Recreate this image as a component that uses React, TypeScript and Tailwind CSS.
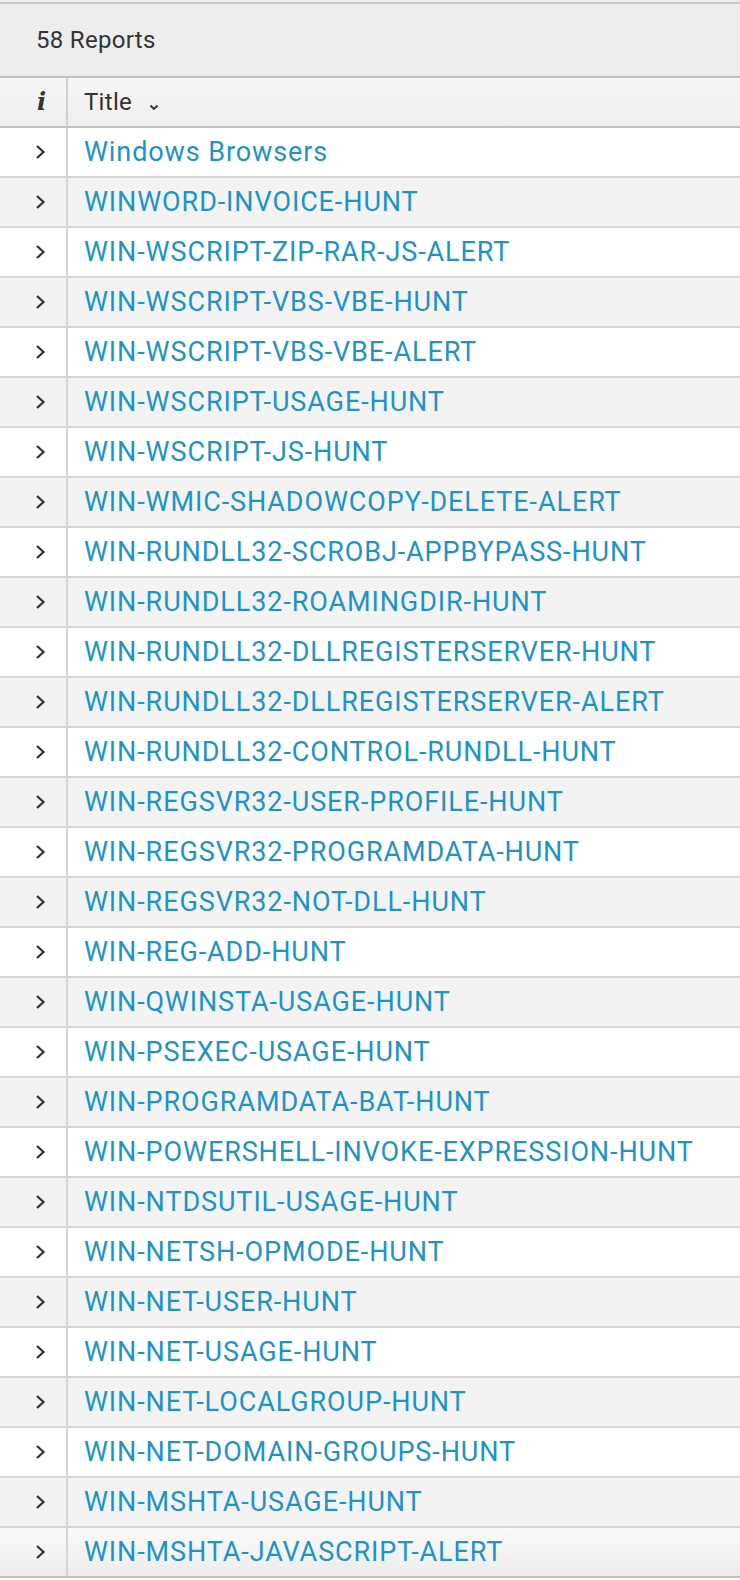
const REPORTS = [
  "Windows Browsers",
  "WINWORD-INVOICE-HUNT",
  "WIN-WSCRIPT-ZIP-RAR-JS-ALERT",
  "WIN-WSCRIPT-VBS-VBE-HUNT",
  "WIN-WSCRIPT-VBS-VBE-ALERT",
  "WIN-WSCRIPT-USAGE-HUNT",
  "WIN-WSCRIPT-JS-HUNT",
  "WIN-WMIC-SHADOWCOPY-DELETE-ALERT",
  "WIN-RUNDLL32-SCROBJ-APPBYPASS-HUNT",
  "WIN-RUNDLL32-ROAMINGDIR-HUNT",
  "WIN-RUNDLL32-DLLREGISTERSERVER-HUNT",
  "WIN-RUNDLL32-DLLREGISTERSERVER-ALERT",
  "WIN-RUNDLL32-CONTROL-RUNDLL-HUNT",
  "WIN-REGSVR32-USER-PROFILE-HUNT",
  "WIN-REGSVR32-PROGRAMDATA-HUNT",
  "WIN-REGSVR32-NOT-DLL-HUNT",
  "WIN-REG-ADD-HUNT",
  "WIN-QWINSTA-USAGE-HUNT",
  "WIN-PSEXEC-USAGE-HUNT",
  "WIN-PROGRAMDATA-BAT-HUNT",
  "WIN-POWERSHELL-INVOKE-EXPRESSION-HUNT",
  "WIN-NTDSUTIL-USAGE-HUNT",
  "WIN-NETSH-OPMODE-HUNT",
  "WIN-NET-USER-HUNT",
  "WIN-NET-USAGE-HUNT",
  "WIN-NET-LOCALGROUP-HUNT",
  "WIN-NET-DOMAIN-GROUPS-HUNT",
  "WIN-MSHTA-USAGE-HUNT",
  "WIN-MSHTA-JAVASCRIPT-ALERT",
];

function Chevron() {
  return (
    <svg width="11" height="16" viewBox="0 0 11 16" className="block">
      <polyline points="2,2 8.5,8 2,14" fill="none" stroke="#333" strokeWidth="2.2" />
    </svg>
  );
}

export default function App() {
  return (
    <div
      className="w-[740px] bg-white"
      style={{ fontFamily: "Roboto, 'Liberation Sans', sans-serif" }}
    >
      <div className="h-[2px] bg-[#ededed]" />
      {/* Count bar */}
      <div className="h-[74px] bg-[#ededed] border-t-2 border-[#c8c8c8] flex items-center pl-[36px] text-[24px] tracking-[0.3px] text-[#333]">
        58 Reports
      </div>

      {/* Column header */}
      <div className="flex h-[52px] border-y-2 border-[#c0c0c0] bg-gradient-to-b from-[#f6f6f6] to-[#eeeeee]">
        <div className="w-[68px] border-r-2 border-[#d0d0d0] flex items-center pl-[37px]">
          <span
            className="italic font-bold text-[24px] text-[#333]"
            style={{ fontFamily: "'DejaVu Serif', 'Liberation Serif', serif" }}
          >
            i
          </span>
        </div>
        <div className="flex items-center pl-[16px] text-[24px] tracking-[0.3px] text-[#333]">
          Title
          <svg width="10" height="7" viewBox="0 0 10 7" className="ml-[17px] mt-[10px]">
            <polyline points="1.5,1.5 5,5 8.5,1.5" fill="none" stroke="#333" strokeWidth="1.8" />
          </svg>
        </div>
      </div>

      {/* Rows */}
      {REPORTS.map((title, i) => {
        const last = i === REPORTS.length - 1;
        const bg = last
          ? "bg-gradient-to-b from-[#fafafa] to-[#ececec] border-[#c0c0c0]"
          : i % 2 === 0
          ? "bg-white border-[#d5d5d5]"
          : "bg-[#f3f3f3] border-[#d5d5d5]";
        return (
          <div key={title} className={`flex h-[50px] border-b-2 ${bg}`}>
            <div className="w-[68px] border-r-2 border-[#d5d5d5] flex items-center pl-[35px]">
              <Chevron />
            </div>
            <div className="flex items-center pl-[16px] text-[27px] text-[#1e93c6] tracking-[0.9px] whitespace-nowrap">
              {title}
            </div>
          </div>
        );
      })}
    </div>
  );
}
